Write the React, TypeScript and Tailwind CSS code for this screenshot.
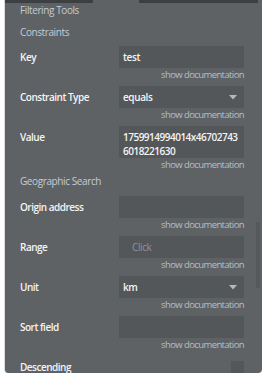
import React from 'react'

type FieldProps = {
  label: string
  value?: string
  lines?: string[]
  placeholder?: string
  dropdown?: boolean
  last?: boolean
}

const Caret = () => (
  <svg width="8" height="5" viewBox="0 0 8 5" className="shrink-0">
    <path d="M0 0 L8 0 L4 4.5 Z" fill="#b4b9be" />
  </svg>
)

const Doc = () => (
  <div className="h-[14px] w-[125px] ml-[99px] text-right text-[9.5px] leading-[14px] tracking-[-0.6px] text-[#b9bec3]">
    show documentation
  </div>
)

const Field = ({ label, value, lines, placeholder, dropdown, last }: FieldProps) => {
  return (
    <div className={last ? '' : 'mb-[4px]'}>
      <div className="flex items-start">
        <div className="w-[99px] h-[22px] leading-[22px] text-[10px] font-semibold tracking-[-0.5px] text-[#f4f4f4]">
          {label}
        </div>
        {lines ? (
          <div className="w-[125px] h-[32px] bg-[#53575a] pl-[4px] pt-[4px] text-[10px] leading-[14px] tracking-[-0.5px] font-semibold text-[#f4f4f4]">
            {lines.map((l) => (
              <div key={l}>{l}</div>
            ))}
          </div>
        ) : (
          <div className="w-[125px] h-[22px] bg-[#53575a] flex items-center justify-between pl-[4px] pr-[7px] text-[10px] font-semibold tracking-[-0.4px] text-[#f4f4f4]">
            {placeholder ? (
              <span className="pl-[9px] font-normal text-[#8e9398]">{placeholder}</span>
            ) : (
              <span>{value}</span>
            )}
            {dropdown && <Caret />}
          </div>
        )}
      </div>
      <Doc />
    </div>
  )
}

const Header = ({ title, className }: { title: string; className: string }) => (
  <div className={`${className} flex items-center text-[10px] tracking-[-0.4px] text-[#c2ccd6]`}>{title}</div>
)

export default function App() {
  return (
    <div className="w-[276px] h-[375px] bg-white overflow-hidden" style={{ fontFamily: '"Open Sans", "Noto Sans", sans-serif' }}>
      <div className="relative ml-[4px] w-[258px] h-[373px] bg-[#5e6265] rounded-b-[4px] border-l border-[#d9dbdd] overflow-hidden">
        <div className="absolute top-0 left-0 right-[4px] h-[3px] flex">
          <div className="w-[88px] bg-[#3d4043]" />
          <div className="w-[46px]" />
          <div className="flex-1 bg-[#3d4043]" />
        </div>
        <div className="absolute right-[2px] top-[222px] w-[4px] h-[66px] bg-[#55595c]" />
        <div className="pl-[15px]">
          <Header title="Filtering Tools" className="h-[20px]" />
          <Header title="Constraints" className="h-[22px] mt-[1px]" />
          <div className="pt-[3px]">
            <Field label="Key" value="test" />
            <Field label="Constraint Type" value="equals" dropdown />
            <Field label="Value" lines={['1759914994014x46702743', '6018221630']} last />
          </div>
          <Header title="Geographic Search" className="h-[18px]" />
          <div className="pt-[6px]">
            <Field label="Origin address" />
            <Field label="Range" placeholder="Click" />
            <Field label="Unit" value="km" dropdown />
            <Field label="Sort field" />
          </div>
          <div className="flex items-center h-[22px]">
            <div className="w-[99px] text-[10px] font-semibold tracking-[-0.5px] text-[#f4f4f4]">Descending</div>
            <div className="ml-[112px] w-[13px] h-[13px] bg-[#53575a]" />
          </div>
        </div>
      </div>
    </div>
  )
}
